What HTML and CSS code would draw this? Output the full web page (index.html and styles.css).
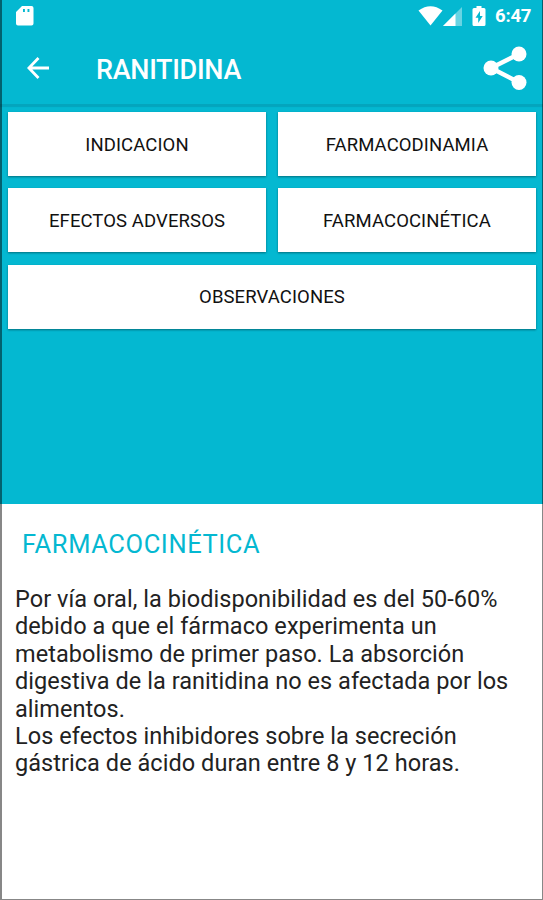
FILE: index.html
```html
<!DOCTYPE html>
<html lang="es">
<head>
    <meta charset="utf-8">
    <title>Ranitidina</title>
    <link rel="stylesheet" href="styles.css">
</head>
<body>
    <div class="screen">
        <div class="status-bar">
            <svg class="icon-sd" width="18" height="20" viewBox="0 0 18 20">
                <path fill="#fff" fill-rule="evenodd" d="M6 0h9.500q2 0 2 2v15.500q0 2-2 2h-13.500q-2 0-2-2V6zM7 3v3h1.900V3zM11.500 3v3h1.900V3z"/>
            </svg>
            <div class="status-icons">
                <svg class="icon-wifi" width="25" height="20" viewBox="0 0 25 20">
                    <path fill="#fff" d="M.5 4.500Q12.500-4 24.500 4.500L12.500 19.500z"/>
                </svg>
                <svg class="icon-signal" width="19" height="19" viewBox="0 0 19 19">
                    <path fill="#fff" fill-opacity=".4" d="M19 0v19H0z"/>
                    <path fill="#fff" d="M12.500 6.500V19H0z"/>
                </svg>
                <svg class="icon-battery" width="14" height="20" viewBox="0 0 14 20">
                    <path fill="#fff" d="M4.500 0h5v2H12q1.500 0 1.500 1.500v15q0 1.500-1.500 1.500H2q-1.500 0-1.500-1.500v-15Q.5 2 2 2h2.500z"/>
                    <path fill="#04b8d1" d="M8 5L3.500 11.700h2.700V17l4.500-7H8z"/>
                </svg>
                <span class="clock">6:47</span>
            </div>
        </div>

        <div class="toolbar">
            <svg class="icon-back" width="22" height="22" viewBox="0 0 22 22">
                <path fill="none" stroke="#fff" stroke-width="2.800" d="M11.500 1L1.900 11l9.600 10M2 11h20"/>
            </svg>
            <h1 class="title">RANITIDINA</h1>
            <svg class="icon-share" width="44" height="44" viewBox="0 0 44 44">
                <path fill="none" stroke="#fff" stroke-width="4.500" d="M36 8L8 22l28 14.500"/>
                <circle cx="8" cy="22" r="7.500" fill="#fff"/>
                <circle cx="36" cy="8" r="7.500" fill="#fff"/>
                <circle cx="36" cy="36.500" r="7.500" fill="#fff"/>
            </svg>
        </div>

        <div class="menu">
            <button class="menu-button">INDICACION</button>
            <button class="menu-button">FARMACODINAMIA</button>
            <button class="menu-button">EFECTOS ADVERSOS</button>
            <button class="menu-button">FARMACOCINÉTICA</button>
            <button class="menu-button wide">OBSERVACIONES</button>
        </div>

        <div class="content">
            <h2 class="content-title">FARMACOCINÉTICA</h2>
            <p class="content-text">Por vía oral, la biodisponibilidad es del 50-60%<br>
            debido a que el fármaco experimenta un<br>
            metabolismo de primer paso. La absorción<br>
            digestiva de la ranitidina no es afectada por los<br>
            alimentos.<br>
            Los efectos inhibidores sobre la secreción<br>
            gástrica de ácido duran entre 8 y 12 horas.</p>
        </div>
    </div>
</body>
</html>
```

FILE: styles.css
```css
* {
    box-sizing: border-box;
}

body {
    margin: 0;
    font-family: Roboto, "Liberation Sans", sans-serif;
}

.screen {
    position: relative;
    display: flex;
    flex-direction: column;
    height: 900px;
    overflow: hidden;
    background-color: #04b8d1;
}

/* thin dark edge over the whole screen */
.screen::after {
    content: "";
    position: absolute;
    inset: 0;
    border: solid rgba(0, 0, 0, 0.47);
    border-width: 0 1px 1px 2px;
    pointer-events: none;
}

.status-bar {
    display: flex;
    justify-content: space-between;
    height: 32px;
    padding: 6px 12px 0 16px;
}

.status-icons {
    display: flex;
    align-items: flex-start;
}

.icon-signal {
    margin: 1px 10px 0 0;
}

.clock {
    width: 36px;
    margin-left: 9px;
    font-size: 18.500px;
    font-weight: 700;
    line-height: 21px;
    letter-spacing: -0.2px;
    color: #fff;
    white-space: nowrap;
}

.toolbar {
    display: flex;
    align-items: center;
    height: 72px;
    padding: 0 16px 0 27px;
}

.title {
    flex: 1;
    margin: 3px 0 0 47px;
    font-size: 27px;
    font-weight: 500;
    letter-spacing: -0.3px;
    color: #fff;
}

.menu {
    display: grid;
    grid-template-columns: 1fr 1fr;
    grid-auto-rows: 64px;
    gap: 12.400px 12px;
    height: 400px;
    padding: 8px 7px 0 8px;
    box-shadow: inset 0 4px 1px -1px #04a5bd;
}

.menu-button {
    padding: 1px 0 0;
    border: 0;
    background-color: #fff;
    box-shadow: 0 1px 2px rgba(0, 0, 0, 0.4);
    font-family: inherit;
    font-size: 18.500px;
    letter-spacing: 0.1px;
    color: #111;
}

.wide {
    grid-column: span 2;
}

.content {
    flex: 1;
    padding: 24px 14px 0 15px;
    background-color: #fff;
}

.content-title {
    margin: 0 0 26px 7px;
    font-size: 25.500px;
    font-weight: 400;
    line-height: 32px;
    letter-spacing: 0.6px;
    color: #04b8d1;
}

.content-text {
    margin: 0;
    font-size: 23.500px;
    line-height: 27.400px;
    letter-spacing: 0.050px;
    color: #222;
    white-space: nowrap;
}
```
